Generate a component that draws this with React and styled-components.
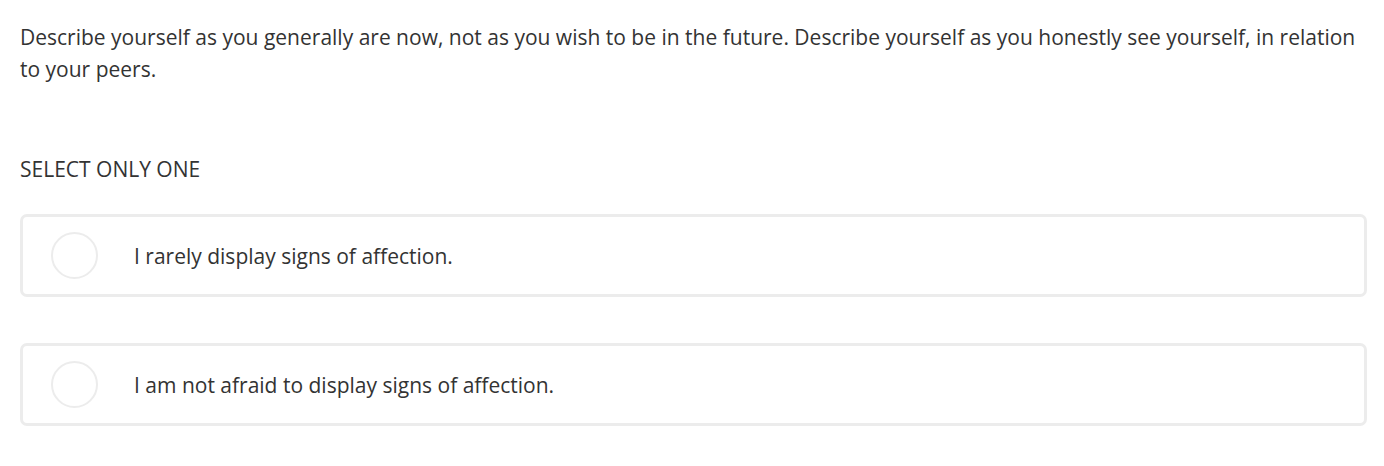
import React, { useState } from "react";
import styled, { createGlobalStyle } from "styled-components";

const GlobalStyle = createGlobalStyle`
  body {
    margin: 0;
    background: #fff;
    font-family: "Open Sans", "Liberation Sans", sans-serif;
    color: #333;
  }
`;

const Page = styled.main`
  padding: 21px 17px 0 20px;
`;

const Prompt = styled.p`
  margin: 0;
  font-size: 21px;
  line-height: 32px;
  color: #333;
`;

const Hint = styled.div`
  margin-top: 70px;
  font-size: 21px;
  line-height: 28px;
  text-transform: uppercase;
  color: #333;
`;

const Options = styled.div`
  display: flex;
  flex-direction: column;
  gap: 46px;
  margin-top: 31px;
`;

const Option = styled.label`
  display: flex;
  align-items: center;
  height: 83px;
  box-sizing: border-box;
  border: 3px solid ${({ selected }) => (selected ? "#0276e1" : "#ececec")};
  border-radius: 7px;
  padding-left: 28px;
  cursor: pointer;
  background: #fff;

  input {
    display: none;
  }
`;

const Radio = styled.span`
  width: 47px;
  height: 47px;
  box-sizing: border-box;
  border-radius: 50%;
  border: 2px solid ${({ selected }) => (selected ? "#0276e1" : "#ececec")};
  flex-shrink: 0;
`;

const OptionText = styled.span`
  margin-left: 36px;
  font-size: 21px;
  color: #333;
`;

const options = [
  "I rarely display signs of affection.",
  "I am not afraid to display signs of affection.",
];

const App = () => {
  const [selected, setSelected] = useState(null);

  return (
    <Page>
      <GlobalStyle />
      <Prompt>
        Describe yourself as you generally are now, not as you wish to be in
        the future. Describe yourself as you honestly see yourself, in relation
        to your peers.
      </Prompt>
      <Hint>Select only one</Hint>
      <Options>
        {options.map((o, i) => (
          <Option key={o} selected={selected === i}>
            <input
              type="radio"
              name="answer"
              checked={selected === i}
              onChange={() => setSelected(i)}
            />
            <Radio selected={selected === i} />
            <OptionText>{o}</OptionText>
          </Option>
        ))}
      </Options>
    </Page>
  );
};

export default App;
